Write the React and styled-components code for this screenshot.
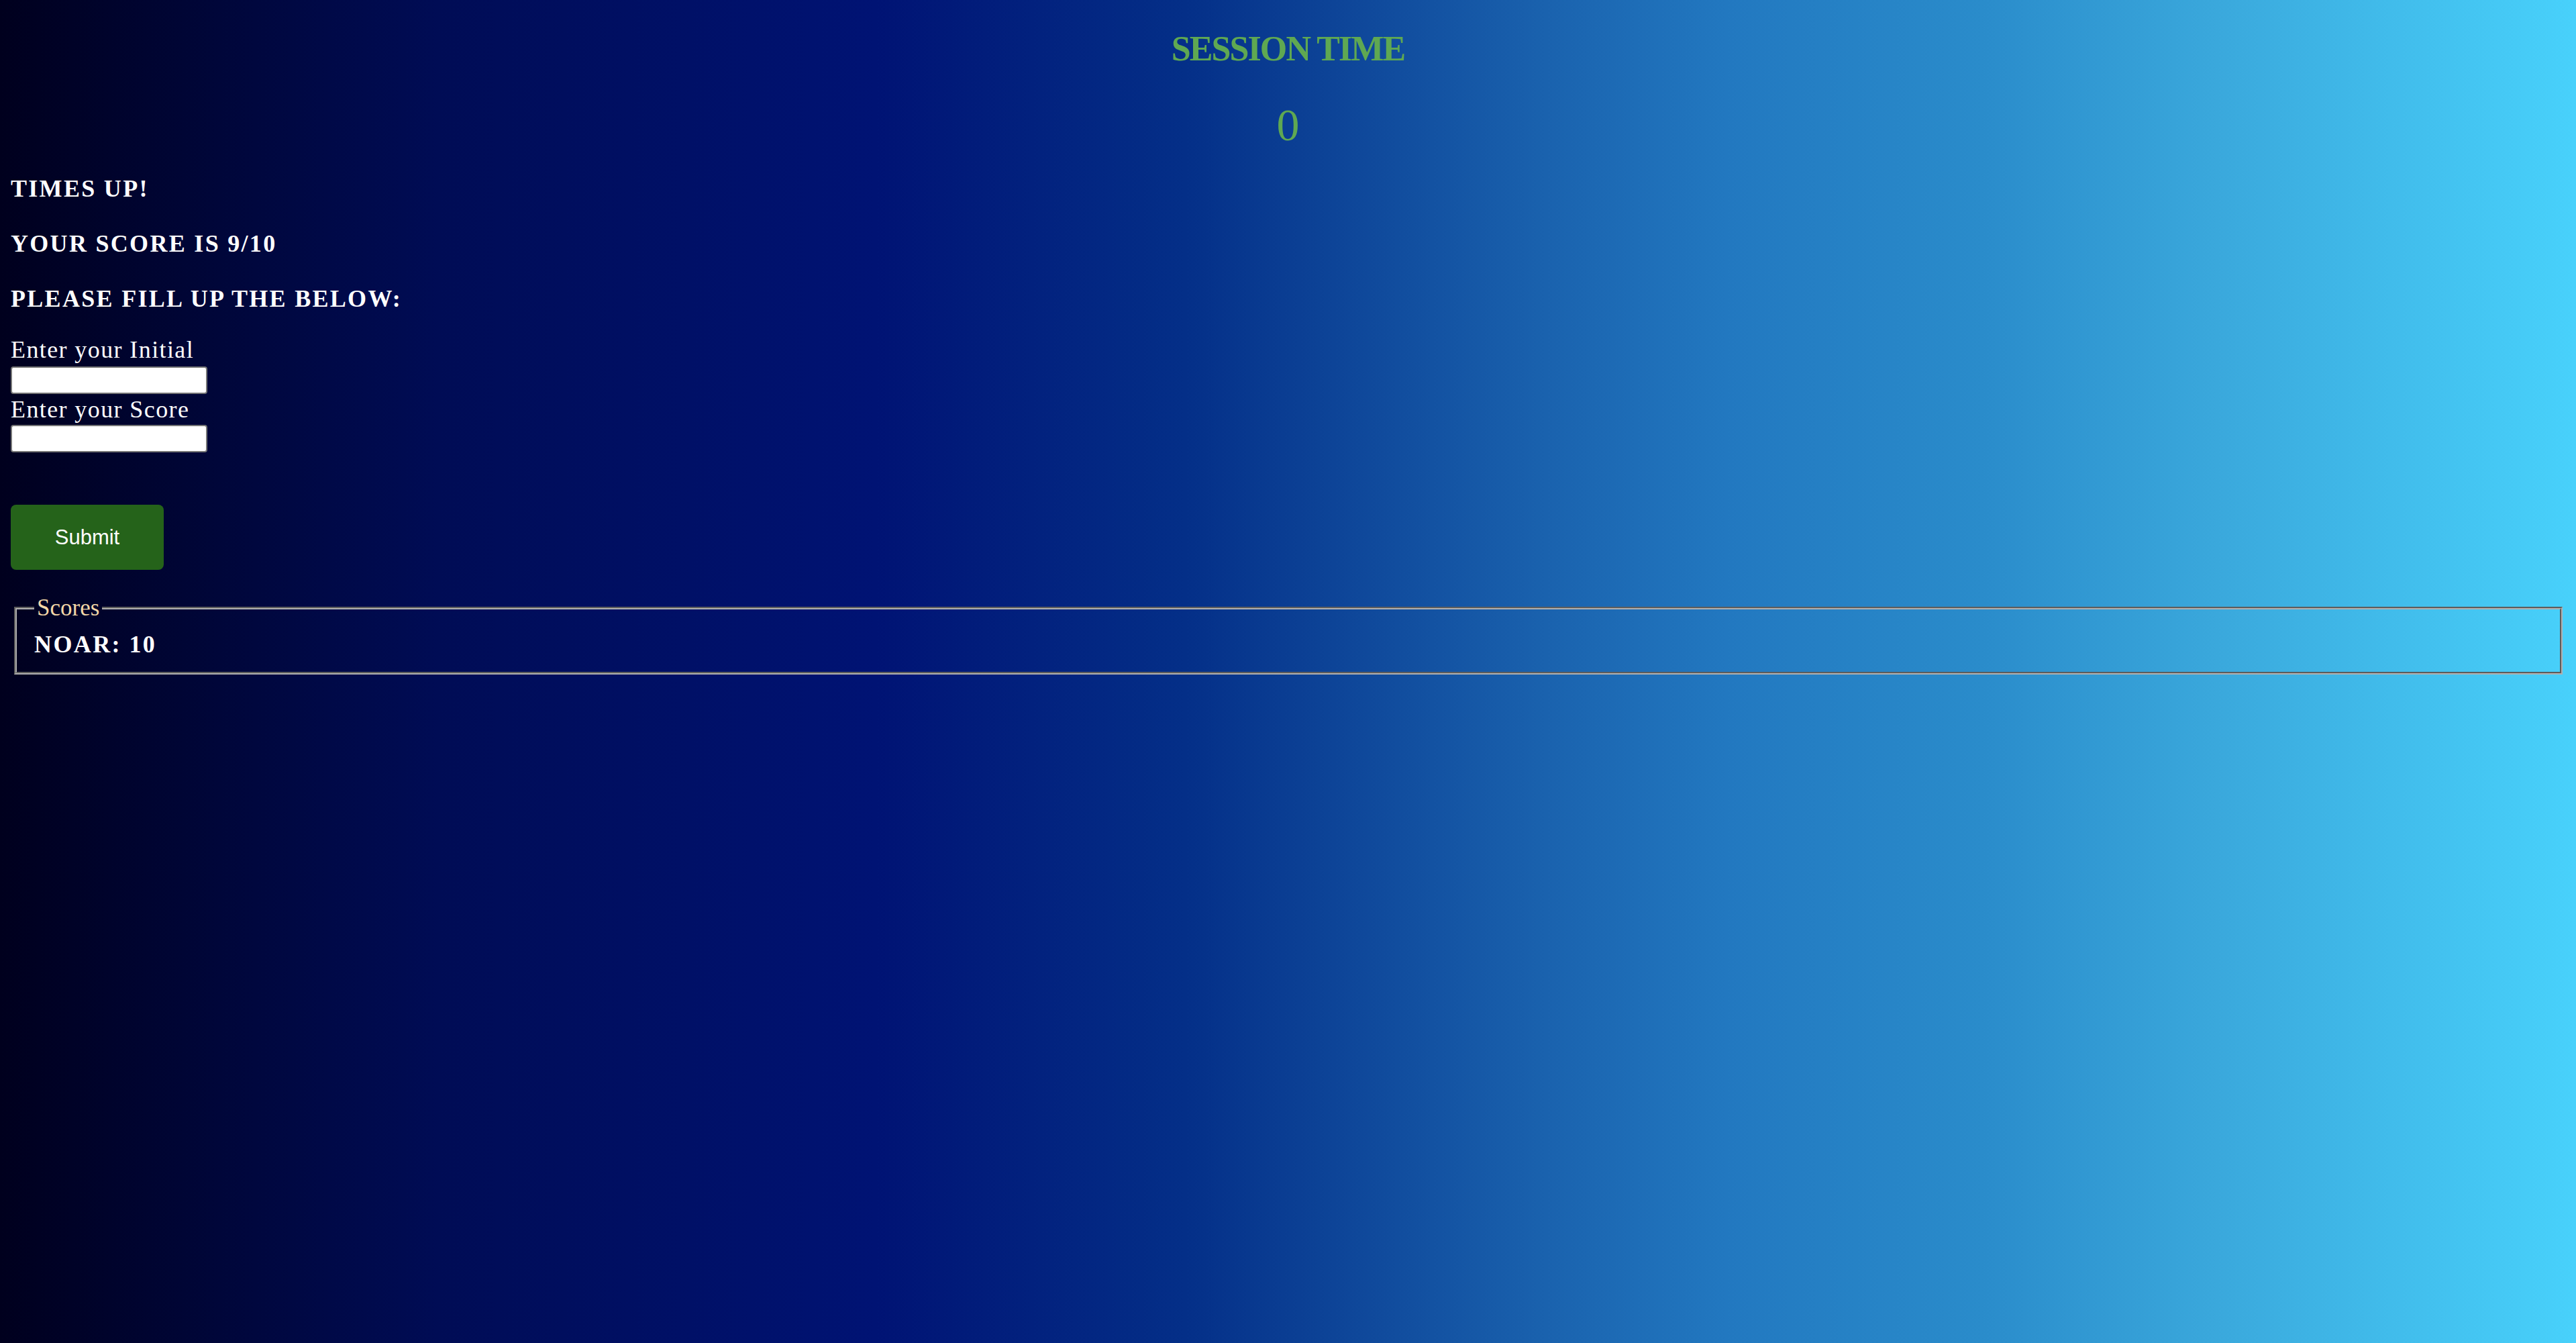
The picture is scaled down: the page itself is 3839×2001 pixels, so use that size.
import React from "react";
import styled, { createGlobalStyle } from "styled-components";

const GlobalStyle = createGlobalStyle`
html, body {
  margin: 0;
  padding: 0;
}
body {
  min-height: 100vh;
  background: linear-gradient(
    to right,
    #00001e 0%,
    #000c55 17%,
    #001374 34%,
    #042f88 46%,
    #1a62ae 60%,
    #2278c0 67%,
    #2a8ccb 77%,
    #3aa8dc 86%,
    #48d1fb 100%
  );
  font-family: "Liberation Serif", "Times New Roman", serif;
  color: #ffffff;
}
`

const Page = styled.main`
display: flex;
flex-direction: column;
align-items: flex-start;
padding: 0 20px 40px 16px;
`

const Header = styled.header`
align-self: stretch;
display: flex;
flex-direction: column;
align-items: center;
margin-left: -16px;
margin-right: -20px;
color: #5fa852;
`

const Title = styled.h2`
margin: 43px 0 0;
font-size: 52px;
line-height: 60px;
font-weight: 700;
letter-spacing: -1.9px;
`

const Timer = styled.div`
margin-top: 45px;
font-size: 68px;
line-height: 76px;
`

const Heading = styled.h4`
margin: ${(p) => p.$gap}px 0 0 0;
font-size: 36px;
line-height: 44px;
font-weight: 700;
letter-spacing: 2.3px;
`

const Form = styled.form`
display: flex;
flex-direction: column;
align-items: flex-start;
margin-top: 34px;
`

const Label = styled.label`
font-size: 36px;
line-height: 40px;
letter-spacing: 1.4px;
margin-top: ${(p) => p.$gap || 0}px;
`

const Input = styled.input`
box-sizing: border-box;
width: 293px;
height: 41px;
margin-top: ${(p) => p.$gap}px;
border: 2px solid #767676;
border-radius: 4px;
background: #ffffff;
padding: 0 6px;
font-size: 24px;
`

const SubmitButton = styled.button`
margin-top: 78px;
width: 228px;
height: 97px;
border: none;
border-radius: 8px;
background: #25631a;
color: #ffffff;
font-family: "Liberation Sans", Arial, sans-serif;
font-size: 31px;
cursor: pointer;
`

const ScoreBox = styled.fieldset`
align-self: stretch;
margin: 37px 0 0 5px;
padding: 14px 26px 21px;
border: 4px groove #b0b0b0;
`

const Legend = styled.legend`
padding: 0 4px;
font-size: 35px;
line-height: 40px;
color: #f3d7a8;
`

const ScoreRow = styled.div`
font-size: 36px;
line-height: 40px;
font-weight: 700;
letter-spacing: 2.4px;
`

const scores = [{ name: "NOAR", score: 10 }];

const App = () => {
    return (
        <>
            <GlobalStyle />
            <Page>
                <Header>
                    <Title>SESSION TIME</Title>
                    <Timer>0</Timer>
                </Header>
                <Heading $gap={35}>TIMES UP!</Heading>
                <Heading $gap={38}>YOUR SCORE IS 9/10</Heading>
                <Heading $gap={38}>PLEASE FILL UP THE BELOW:</Heading>
                <Form onSubmit={(e) => e.preventDefault()}>
                    <Label htmlFor="initial">Enter your Initial</Label>
                    <Input id="initial" type="text" $gap={5} />
                    <Label htmlFor="score" $gap={3}>Enter your Score</Label>
                    <Input id="score" type="text" $gap={3} />
                    <SubmitButton type="submit">Submit</SubmitButton>
                </Form>
                <ScoreBox>
                    <Legend>Scores</Legend>
                    {scores.map((s) => (
                        <ScoreRow key={s.name}>{s.name}: {s.score}</ScoreRow>
                    ))}
                </ScoreBox>
            </Page>
        </>
    );
};

export default App;
